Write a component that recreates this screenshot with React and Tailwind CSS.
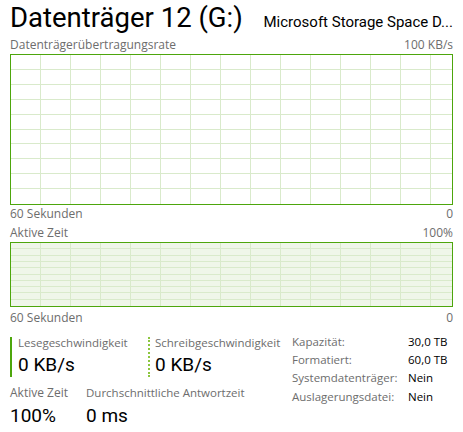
import React from "react";

const Grid = ({ width, height, rows, cols = 30, offset = 30 }) => {
  const v = [];
  for (let x = offset - 1; x < width; x += cols) v.push(x + 0.5);
  const h = [];
  for (let i = 1; i < rows; i++) h.push(Math.round((height * i) / rows) - 0.5);
  return (
    <svg width={width} height={height} className="block">
      {v.map((x) => (
        <line key={"v" + x} x1={x} x2={x} y1={0} y2={height} stroke="#d9eacb" strokeWidth="1" />
      ))}
      {h.map((y) => (
        <line key={"h" + y} x1={0} x2={width} y1={y} y2={y} stroke="#d9eacb" strokeWidth="1" />
      ))}
    </svg>
  );
};

const sans = { fontFamily: '"Open Sans", "Noto Sans", sans-serif' };
const roboto = { fontFamily: 'Roboto, "Open Sans", sans-serif' };

const Caption = ({ left, right, className = "" }) => (
  <div className={"flex justify-between h-[18px] text-[12px] leading-[18px] text-[#6d6d6d] " + className}>
    <span>{left}</span>
    <span>{right}</span>
  </div>
);

const Info = ({ label, value }) => (
  <div className="flex h-[18.4px] items-center text-[11.5px] whitespace-nowrap">
    <span className="w-[116px] text-[#6d6d6d]">{label}</span>
    <span className="text-black">{value}</span>
  </div>
);

const Stat = ({ label, value }) => (
  <>
    <div className="h-[12px] text-[11.5px] leading-[12px] text-[#6d6d6d] whitespace-nowrap">{label}</div>
    <div className="mt-[4px] text-[19px] leading-[24px] text-black whitespace-nowrap" style={roboto}>
      {value}
    </div>
  </>
);

export default function App() {
  return (
    <div className="w-[463px] h-[432px] bg-white px-[10px] overflow-hidden" style={sans}>
      <div className="flex items-baseline justify-between h-[36px] whitespace-nowrap" style={roboto}>
        <span className="text-[27.5px] leading-[36px] text-black">Datenträger 12 (G:)</span>
        <span className="text-[15px] leading-[36px] text-black">Microsoft Storage Space D...</span>
      </div>
      <Caption left="Datenträgerübertragungsrate" right="100 KB/s" />
      <div className="w-[443px] h-[151px] border border-[#4da60c] bg-white">
        <Grid width={441} height={149} rows={10} />
      </div>
      <Caption left="60 Sekunden" right="0" />
      <Caption left="Aktive Zeit" right="100%" className="mt-[1px]" />
      <div className="w-[443px] h-[65px] border border-[#4da60c] bg-[#eff6e9]">
        <Grid width={441} height={63} rows={10} />
      </div>
      <Caption left="60 Sekunden" right="0" className="mt-[2px]" />

      <div className="flex mt-[5px]">
        <div className="w-[282px] pt-[5px]">
          <div className="flex h-[40px]">
            <div className="w-[138px] border-l-2 border-[#4da60c] pl-[6px]">
              <Stat label="Lesegeschwindigkeit" value="0 KB/s" />
            </div>
            <div className="border-l-2 border-dotted border-[#8cc63f] pl-[5px]">
              <Stat label="Schreibgeschwindigkeit" value="0 KB/s" />
            </div>
          </div>
          <div className="flex mt-[8px]">
            <div className="w-[76px]">
              <div className="h-[16px] text-[12px] leading-[16px] text-[#6d6d6d]">Aktive Zeit</div>
              <div className="mt-[3px] text-[19px] leading-[24px] text-black" style={roboto}>100%</div>
            </div>
            <div>
              <div className="h-[16px] text-[11.5px] leading-[16px] text-[#6d6d6d] whitespace-nowrap">
                Durchschnittliche Antwortzeit
              </div>
              <div className="mt-[3px] text-[19px] leading-[24px] text-black" style={roboto}>0 ms</div>
            </div>
          </div>
        </div>
        <div>
          <Info label="Kapazität:" value="30,0 TB" />
          <Info label="Formatiert:" value="60,0 TB" />
          <Info label="Systemdatenträger:" value="Nein" />
          <Info label="Auslagerungsdatei:" value="Nein" />
        </div>
      </div>
    </div>
  );
}
